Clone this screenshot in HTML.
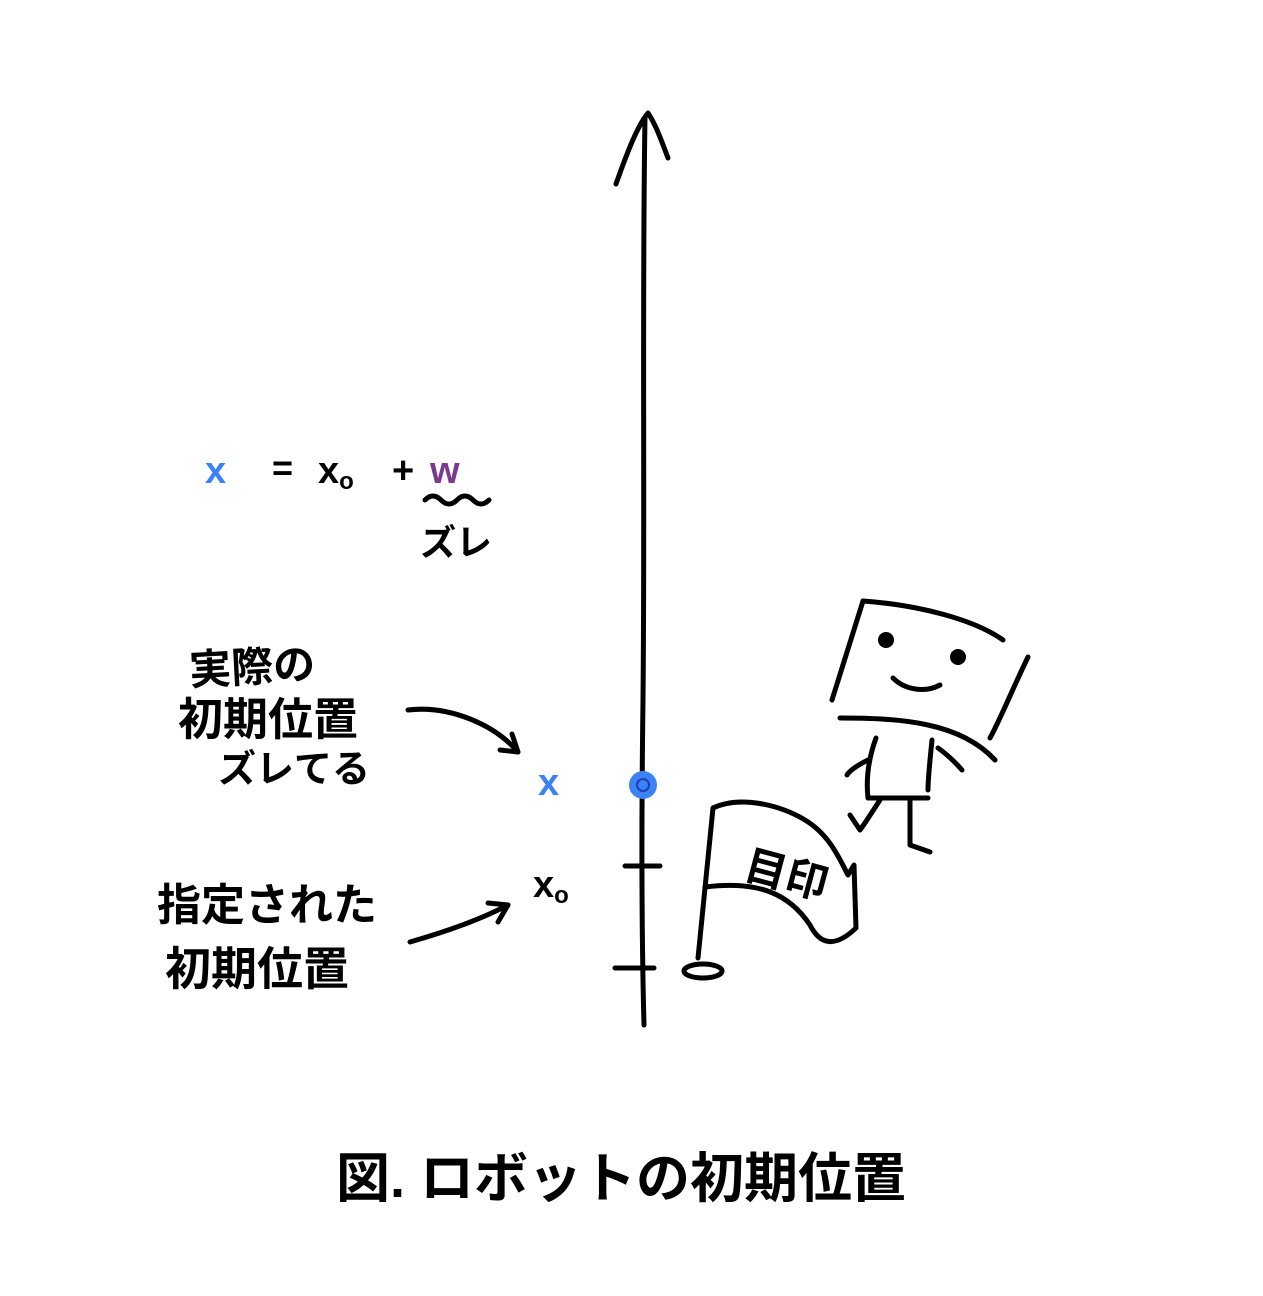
<!DOCTYPE html>
<html><head><meta charset="utf-8"><style>
html,body{margin:0;padding:0;background:#fff;}
svg{display:block}
text{font-family:"Liberation Sans","Noto Sans CJK JP",sans-serif;}
</style></head><body>
<svg width="1263" height="1296" viewBox="0 0 1263 1296" xmlns="http://www.w3.org/2000/svg">
<g fill="none" stroke="#000" stroke-width="5" stroke-linecap="round" stroke-linejoin="round">
<!-- axis -->
<path d="M645 118 C642 300 645 500 643 700 C641 850 642 950 644 1025"/>
<path d="M616 184 C628 150 638 125 648 113 C656 125 662 142 668 158"/>
<path d="M625 866 L660 866"/>
<path d="M615 968 L654 968"/>
<!-- arrows -->
<path d="M408 710 C450 705 495 725 518 752"/>
<path d="M500 750 L518 752 L512 734"/>
<path d="M410 942 C445 932 480 920 508 905"/>
<path d="M488 903 L508 905 L498 922"/>
<!-- wavy underline -->
<path d="M425 500 q8 -8 16 0 q8 8 16 0 q8 -8 16 0 q8 8 16 0"/>
<!-- flag -->
<path d="M713 808 L698 958"/>
<ellipse cx="703" cy="971" rx="19" ry="7"/>
<path d="M713 808 C740 795 780 805 805 820 C830 835 840 860 848 875 L854 865 L856 928 C835 948 820 945 810 925 C790 895 760 880 705 887"/>
<!-- robot -->
<path d="M863 601 L832 700"/>
<path d="M863 601 C920 605 975 620 1003 640"/>
<path d="M1028 657 C1012 690 1000 720 990 738"/>
<path d="M840 718 C900 718 960 722 995 760"/>
<path d="M876 738 C868 760 866 780 868 798"/>
<path d="M932 740 C930 760 928 778 928 790"/>
<path d="M868 798 L928 798"/>
<path d="M868 760 C858 765 850 770 847 775"/>
<path d="M938 748 C948 755 955 762 962 770"/>
<path d="M880 800 C872 812 866 822 860 830 L850 815"/>
<path d="M910 800 L910 845 L930 852"/>
<path d="M893 678 C905 690 925 693 940 685"/>
</g>
<circle cx="886" cy="640" r="8"/>
<circle cx="958" cy="657" r="8"/>
<circle cx="643" cy="785" r="14" fill="#3b82f6"/>
<circle cx="643" cy="785" r="6" fill="none" stroke="#1e40af" stroke-width="2"/>
<g font-weight="bold" stroke-width="1">
<text x="205" y="483" font-size="38" fill="#3b82f6">x</text>
<text x="272" y="480" font-size="36" fill="#000">=</text>
<text x="318" y="483" font-size="38" fill="#000">x<tspan font-size="24" dy="6">o</tspan></text>
<text x="392" y="483" font-size="38" fill="#000">+</text>
<text x="430" y="483" font-size="38" fill="#7c3a8e">w</text>
<text x="420" y="555" font-size="36" fill="#000">ズレ</text>
<text x="538" y="795" font-size="38" fill="#3b82f6">x</text>
<text x="533" y="897" font-size="38" fill="#000">x<tspan font-size="24" dy="6">o</tspan></text>
<text x="190" y="685" font-size="42" fill="#000" transform="rotate(-3 190 685)">実際の</text>
<text x="178" y="735" font-size="45" fill="#000">初期位置</text>
<text x="218" y="782" font-size="38" fill="#000">ズレてる</text>
<text x="157" y="920" font-size="44" fill="#000">指定された</text>
<text x="165" y="985" font-size="46" fill="#000">初期位置</text>
<text x="742" y="878" font-size="42" fill="#000" transform="rotate(15 742 878)">目印</text>
<text x="336" y="1197" font-size="54" fill="#000">図. ロボットの初期位置</text>
</g>
</svg>
</body></html>
